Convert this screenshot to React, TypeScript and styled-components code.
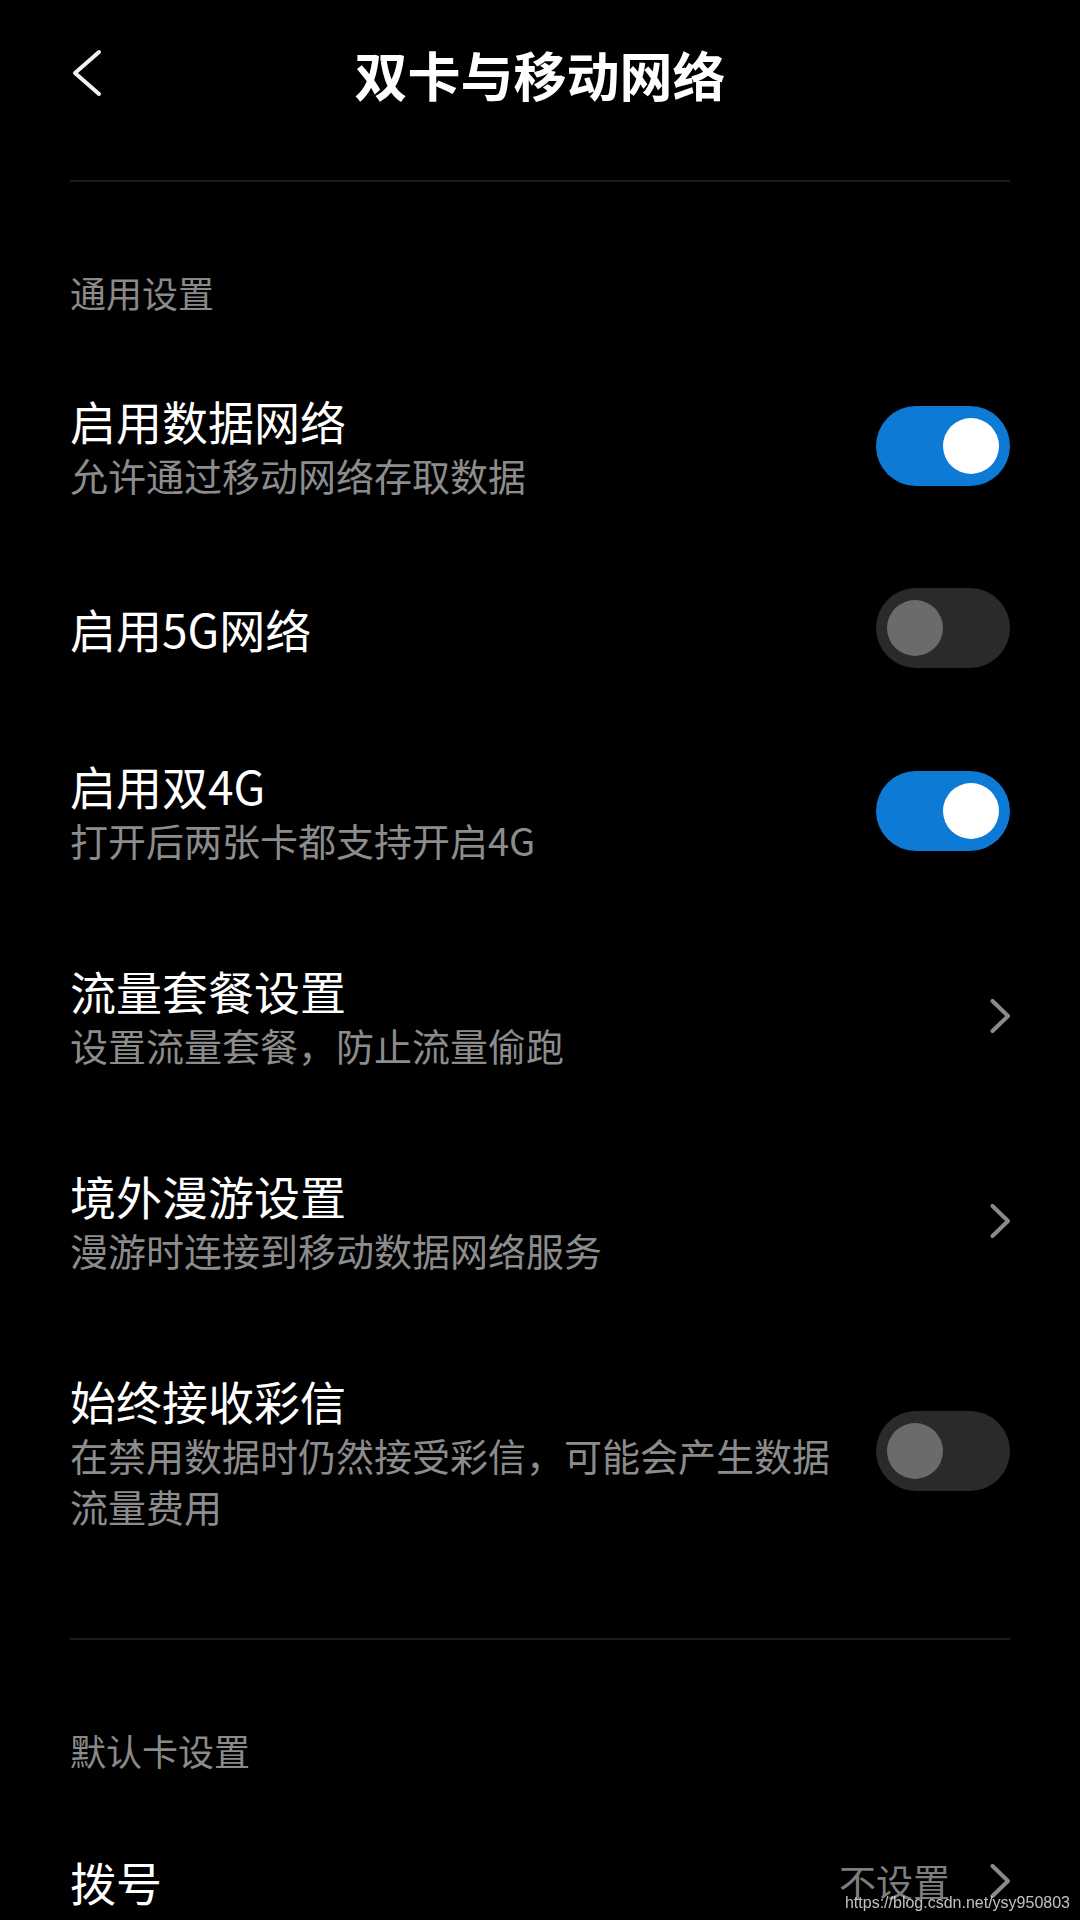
import styled, { createGlobalStyle } from "styled-components";

const GlobalStyle = createGlobalStyle`
  html, body {
    margin: 0;
    padding: 0;
    background: #000;
  }
  body {
    font-family: "Noto Sans CJK SC", "Noto Sans", sans-serif;
    -webkit-font-smoothing: antialiased;
  }
`;

export const Page = styled.div`
  background: #000;
  min-height: 1920px;
  padding: 0 70px;
  box-sizing: border-box;
  overflow: hidden;
`;

export const TopBar = styled.header`
  display: grid;
  grid-template-columns: 1fr auto 1fr;
  align-items: center;
  height: 148px;
`;

export const BackButton = styled.button`
  justify-self: start;
  display: flex;
  background: transparent;
  border: none;
  padding: 0;
  cursor: pointer;
`;

export const Title = styled.h1`
  margin: 0;
  font-size: 53px;
  font-weight: 700;
  line-height: 1;
  color: #fff;
`;

export const Divider = styled.div<{ $gap: number }>`
  height: 2px;
  background: #1c1c1c;
  margin-top: ${({ $gap }) => $gap}px;
`;

export const SectionHeader = styled.h2`
  margin: 85px 0 26px;
  font-size: 36px;
  font-weight: 400;
  line-height: 50px;
  color: #8a8a8a;
`;

export const Row = styled.div`
  display: flex;
  align-items: center;
  gap: 36px;
  min-height: 160px;
  padding: 24px 0;
  box-sizing: border-box;
  cursor: pointer;
`;

export const TextBlock = styled.div`
  flex: 1;
  min-width: 0;
  padding: 24px 0;
`;

export const RowTitle = styled.div`
  font-size: 46px;
  line-height: 58px;
  color: #fff;
`;

export const RowSub = styled.div`
  font-size: 38px;
  line-height: 51px;
  color: #8c8c8c;
`;

export const Trail = styled.div`
  display: flex;
  align-items: center;
  gap: 40px;
  flex-shrink: 0;
`;

export const Value = styled.span`
  font-size: 37px;
  color: #7e7e7e;
`;

export const Toggle = styled.span<{ $on: boolean }>`
  position: relative;
  display: block;
  flex-shrink: 0;
  width: 134px;
  height: 80px;
  border-radius: 40px;
  background: ${({ $on }) => ($on ? "#0d7bd5" : "#2a2a2a")};
  &::after {
    content: "";
    position: absolute;
    top: 12px;
    left: ${({ $on }) => ($on ? "67px" : "11px")};
    width: 56px;
    height: 56px;
    border-radius: 50%;
    background: ${({ $on }) => ($on ? "#fff" : "#6b6b6b")};
  }
`;

export const Watermark = styled.span`
  position: fixed;
  right: 10px;
  bottom: 8px;
  font-family: "Liberation Sans", Arial, sans-serif;
  font-size: 16px;
  color: rgba(225, 225, 225, 0.85);
`;

const Chevron = () => (
  <svg width="20" height="34" viewBox="0 0 20 34">
    <path
      d="M2.5 2 L18 17 L2.5 32"
      fill="none"
      stroke="#8a8a8a"
      strokeWidth="4"
      strokeLinecap="round"
      strokeLinejoin="round"
    />
  </svg>
);

const BackIcon = () => (
  <svg width="34" height="50" viewBox="0 0 34 50">
    <path
      d="M29 3 L5 24 L29 45"
      fill="none"
      stroke="#f2f2f2"
      strokeWidth="4"
      strokeLinecap="round"
      strokeLinejoin="round"
    />
  </svg>
);

type Item = {
  title: string;
  sub?: string;
  toggle?: boolean;
  value?: string;
};

const general: Item[] = [
  { title: "启用数据网络", sub: "允许通过移动网络存取数据", toggle: true },
  { title: "启用5G网络", toggle: false },
  { title: "启用双4G", sub: "打开后两张卡都支持开启4G", toggle: true },
  { title: "流量套餐设置", sub: "设置流量套餐，防止流量偷跑" },
  { title: "境外漫游设置", sub: "漫游时连接到移动数据网络服务" },
  {
    title: "始终接收彩信",
    sub: "在禁用数据时仍然接受彩信，可能会产生数据流量费用",
    toggle: false,
  },
];

const defaults: Item[] = [{ title: "拨号", value: "不设置" }];

function SettingRow({ item }: { item: Item }) {
  return (
    <Row>
      <TextBlock>
        <RowTitle>{item.title}</RowTitle>
        {item.sub && <RowSub>{item.sub}</RowSub>}
      </TextBlock>
      {item.toggle !== undefined ? (
        <Toggle $on={item.toggle} />
      ) : (
        <Trail>
          {item.value && <Value>{item.value}</Value>}
          <Chevron />
        </Trail>
      )}
    </Row>
  );
}

export default function App() {
  return (
    <>
      <GlobalStyle />
      <Page>
        <TopBar>
          <BackButton>
            <BackIcon />
          </BackButton>
          <Title>双卡与移动网络</Title>
          <span />
        </TopBar>
        <Divider $gap={32} />
        <SectionHeader>通用设置</SectionHeader>
        {general.map((item) => (
          <SettingRow key={item.title} item={item} />
        ))}
        <Divider $gap={59} />
        <SectionHeader>默认卡设置</SectionHeader>
        {defaults.map((item) => (
          <SettingRow key={item.title} item={item} />
        ))}
      </Page>
      <Watermark>https://blog.csdn.net/ysy950803</Watermark>
    </>
  );
}
